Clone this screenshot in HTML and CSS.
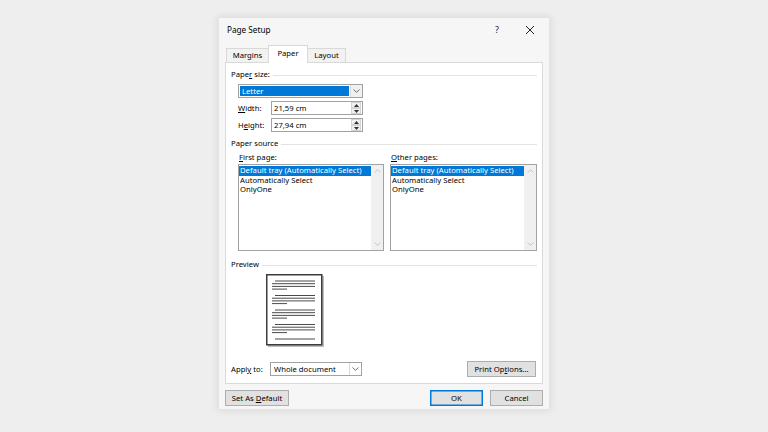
FILE: index.html
```html
<!DOCTYPE html>
<html>
<head>
<meta charset="utf-8">
<title>Page Setup</title>
<link rel="stylesheet" href="styles.css">
</head>
<body>
<div class="page">
  <div class="dialog">
    <div class="titlebar">
      <span class="title">Page Setup</span>
      <span class="help">?</span>
      <span class="close"><svg width="10" height="10" viewBox="0 0 10 10"><path d="M1 1L9 9M9 1L1 9" stroke="#222" stroke-width="1"/></svg></span>
    </div>
    <div class="tabs">
      <div class="tab tab-margins">Margins</div>
      <div class="tab tab-paper active">Paper</div>
      <div class="tab tab-layout">Layout</div>
    </div>
    <div class="panel">
      <div class="group g-size"><span>Pape<u>r</u> size:</span><i></i></div>
      <div class="indent">
        <div class="combo">
          <div class="combo-field"><span class="sel">Letter</span></div>
          <div class="combo-btn"><svg width="7" height="4" viewBox="0 0 7 4"><path d="M0.5 0.5L3.5 3.3L6.5 0.5" fill="none" stroke="#606060" stroke-width="0.9"/></svg></div>
        </div>
        <div class="field-row r-width">
          <span class="flabel"><u>W</u>idth:</span>
          <div class="spin"><span class="spin-text">21,59 cm</span><div class="spin-btns"><span class="sb"><svg width="5" height="3" viewBox="0 0 5 3"><path d="M0 3L2.5 0L5 3Z" fill="#333"/></svg></span><span class="sb"><svg width="5" height="3" viewBox="0 0 5 3"><path d="M0 0L2.5 3L5 0Z" fill="#333"/></svg></span></div></div>
        </div>
        <div class="field-row r-height">
          <span class="flabel">H<u>e</u>ight:</span>
          <div class="spin"><span class="spin-text">27,94 cm</span><div class="spin-btns"><span class="sb"><svg width="5" height="3" viewBox="0 0 5 3"><path d="M0 3L2.5 0L5 3Z" fill="#333"/></svg></span><span class="sb"><svg width="5" height="3" viewBox="0 0 5 3"><path d="M0 0L2.5 3L5 0Z" fill="#333"/></svg></span></div></div>
        </div>
      </div>
      <div class="group g-source"><span>Paper source</span><i></i></div>
      <div class="lists">
        <div class="list-col first">
          <div class="list-label"><u>F</u>irst page:</div>
          <div class="listbox">
            <div class="items">
              <div class="item selected">Default tray (Automatically Select)</div>
              <div class="item">Automatically Select</div>
              <div class="item">OnlyOne</div>
            </div>
            <div class="vscroll">
              <svg width="7" height="4" viewBox="0 0 7 4"><path d="M0.5 3.5L3.5 0.7L6.5 3.5" fill="none" stroke="#c2c2c2" stroke-width="0.9"/></svg>
              <svg width="7" height="4" viewBox="0 0 7 4"><path d="M0.5 0.5L3.5 3.3L6.5 0.5" fill="none" stroke="#c2c2c2" stroke-width="0.9"/></svg>
            </div>
          </div>
        </div>
        <div class="list-col other">
          <div class="list-label"><u>O</u>ther pages:</div>
          <div class="listbox">
            <div class="items">
              <div class="item selected">Default tray (Automatically Select)</div>
              <div class="item">Automatically Select</div>
              <div class="item">OnlyOne</div>
            </div>
            <div class="vscroll">
              <svg width="7" height="4" viewBox="0 0 7 4"><path d="M0.5 3.5L3.5 0.7L6.5 3.5" fill="none" stroke="#c2c2c2" stroke-width="0.9"/></svg>
              <svg width="7" height="4" viewBox="0 0 7 4"><path d="M0.5 0.5L3.5 3.3L6.5 0.5" fill="none" stroke="#c2c2c2" stroke-width="0.9"/></svg>
            </div>
          </div>
        </div>
      </div>
      <div class="group g-preview"><span>Preview</span><i></i></div>
      <div class="preview">
        <svg width="58" height="73" viewBox="0 0 58 73">
          <rect x="2" y="2" width="56" height="71" fill="#bdbdbd"/>
          <rect x="0.75" y="0.75" width="55" height="70" fill="#fff" stroke="#3c3c3c" stroke-width="1.5"/>
          <g stroke="#4a4a4a" stroke-width="1">
            <path d="M9 7H49M6 9.7H49M6 12.4H49M6 15.1H21"/>
            <path d="M9 21.5H49M6 24.2H49M6 26.9H49M6 29.6H21"/>
            <path d="M9 36H49M6 38.7H49M6 41.4H49M6 44.1H21"/>
            <path d="M9 50.5H49M6 53.2H49M6 55.9H49M6 58.6H21"/>
            <path d="M9 65H49"/>
          </g>
        </svg>
      </div>
      <div class="apply-row">
        <span class="alabel">Appl<u>y</u> to:</span>
        <div class="dd">
          <span class="dd-text">Whole document</span>
          <span class="dd-btn"><svg width="7" height="4" viewBox="0 0 7 4"><path d="M0.5 0.5L3.5 3.3L6.5 0.5" fill="none" stroke="#606060" stroke-width="0.9"/></svg></span>
        </div>
        <span class="spacer"></span>
        <button class="btn print-btn">Print Op<u>t</u>ions...</button>
      </div>
    </div>
    <div class="footer">
      <button class="btn default-btn">Set As <u>D</u>efault</button>
      <span class="spacer"></span>
      <button class="btn ok-btn">OK</button>
      <button class="btn cancel-btn">Cancel</button>
    </div>
  </div>
</div>
</body>
</html>
```

FILE: styles.css
```css
html, body {
  margin: 0;
  padding: 0;
}
body {
  background: #eeeeee;
  font-family: "Noto Sans", "Open Sans", sans-serif;
  font-size: 7.7px;
  line-height: 9px;
  color: #000;
}
u {
  text-decoration: underline;
  text-underline-offset: 1px;
  text-decoration-thickness: 0.6px;
}
.page {
  width: 768px;
  height: 432px;
  box-sizing: border-box;
  padding-top: 17px;
  display: flex;
  justify-content: center;
  align-items: flex-start;
  overflow: hidden;
}
.dialog {
  width: 332px;
  height: 393px;
  box-sizing: border-box;
  background: #f6f6f6;
  border: 1px solid #e3e3e3;
  box-shadow: 0 0 8px rgba(0, 0, 0, 0.10);
  padding: 0 6px;
  display: flex;
  flex-direction: column;
}
.titlebar {
  height: 27px;
  box-sizing: border-box;
  padding: 7px 8px 0 2px;
  display: flex;
  align-items: flex-start;
}
.title {
  font-size: 8.2px;
  line-height: 10px;
  flex: 1;
}
.help {
  font-size: 9px;
  line-height: 10px;
  width: 10px;
  text-align: center;
  margin-right: 23px;
  color: #222;
}
.close {
  width: 10px;
  height: 10px;
  display: flex;
}
.tabs {
  height: 17px;
  display: flex;
  align-items: flex-end;
  padding-left: 1px;
  position: relative;
  z-index: 1;
}
.tab {
  height: 14px;
  box-sizing: border-box;
  border: 1px solid #d9d9d9;
  border-bottom: none;
  background: #f2f2f2;
  display: flex;
  align-items: center;
  justify-content: center;
}
.tab-margins { width: 42px; border-right: none; }
.tab-paper { width: 40px; }
.tab-layout { width: 38px; border-left: none; }
.tab.active {
  height: 18px;
  background: #ffffff;
  margin-bottom: -1px;
  padding-bottom: 2px;
}
.panel {
  height: 322px;
  box-sizing: border-box;
  background: #ffffff;
  border: 1px solid #d9d9d9;
  padding: 0 5px;
  display: flex;
  flex-direction: column;
}
.group {
  display: flex;
  align-items: center;
  gap: 3px;
  height: 9px;
}
.group i {
  flex: 1;
  height: 0;
  border-top: 1px solid #e3e3e3;
  margin-top: 1px;
}
.g-size { margin-top: 7px; }
.g-source { margin-top: 7px; }
.g-preview { margin-top: 9px; }
.indent {
  padding-left: 7px;
  display: flex;
  flex-direction: column;
}
.combo {
  margin-top: 5px;
  width: 125px;
  height: 14px;
  box-sizing: border-box;
  border: 1px solid #a2a2a2;
  display: flex;
  background: #fff;
}
.combo-field {
  flex: 1;
  padding: 1px;
  display: flex;
}
.sel {
  flex: 1;
  background: #0078d7;
  color: #fff;
  padding-left: 2px;
  line-height: 10px;
}
.combo-btn {
  width: 11px;
  background: #f0f0f0;
  border-left: 1px solid #dadada;
  display: flex;
  align-items: center;
  justify-content: center;
}
.field-row {
  margin-top: 3px;
  height: 14px;
  display: flex;
  align-items: center;
}
.flabel {
  width: 33px;
}
.spin {
  width: 92px;
  height: 14px;
  box-sizing: border-box;
  border: 1px solid #a2a2a2;
  display: flex;
  align-items: center;
  background: #fff;
}
.spin-text {
  flex: 1;
  padding-left: 2px;
}
.spin-btns {
  width: 10px;
  height: 12px;
  display: flex;
  flex-direction: column;
  margin-right: 1px;
}
.sb {
  flex: 1;
  display: flex;
  align-items: center;
  justify-content: center;
  background: #f0f0f0;
  border: 0.5px solid #d4d4d4;
}
.lists {
  margin-top: 5px;
  padding-left: 7px;
  display: flex;
  gap: 6px;
}
.list-col.first { width: 146px; }
.list-col.other { width: 147px; }
.list-label {
  height: 9px;
  padding-left: 1px;
}
.listbox {
  margin-top: 2px;
  height: 87px;
  box-sizing: border-box;
  border: 1px solid #a2a2a2;
  display: flex;
  background: #fff;
}
.items {
  flex: 1;
  min-width: 0;
  padding-top: 1px;
}
.item {
  height: 9.5px;
  line-height: 9.5px;
  padding-left: 1px;
  white-space: nowrap;
  overflow: hidden;
}
.item.selected {
  background: #0078d7;
  color: #fff;
}
.vscroll {
  width: 12px;
  flex: none;
  background: #f0f0f0;
  display: flex;
  flex-direction: column;
  justify-content: space-between;
  align-items: center;
  padding: 4px 0;
}
.preview {
  margin-top: 5px;
  padding-left: 35px;
  height: 73px;
}
.preview svg { display: block; }
.apply-row {
  margin-top: 14px;
  height: 16px;
  display: flex;
  align-items: center;
}
.alabel { width: 39px; }
.dd {
  width: 92px;
  height: 14px;
  box-sizing: border-box;
  border: 1px solid #a2a2a2;
  display: flex;
  align-items: center;
  background: #fff;
}
.dd-text {
  flex: 1;
  padding-left: 3px;
}
.dd-btn {
  width: 11px;
  height: 12px;
  display: flex;
  align-items: center;
  justify-content: center;
  border-left: 1px solid #dadada;
}
.spacer { flex: 1; }
.btn {
  font-family: inherit;
  font-size: 7.7px;
  line-height: 9px;
  color: #000;
  background: #e1e1e1;
  border: 1px solid #adadad;
  padding: 0;
  margin: 0;
  height: 16px;
  box-sizing: border-box;
}
.print-btn {
  width: 69px;
  margin-right: 1px;
}
.footer {
  margin-top: 6px;
  display: flex;
  align-items: center;
}
.default-btn { width: 64px; }
.ok-btn {
  width: 53px;
  border: 1px solid #0078d7;
  box-shadow: inset 0 0 0 0.5px #0078d7;
}
.cancel-btn {
  width: 53px;
  margin-left: 7px;
}
```
